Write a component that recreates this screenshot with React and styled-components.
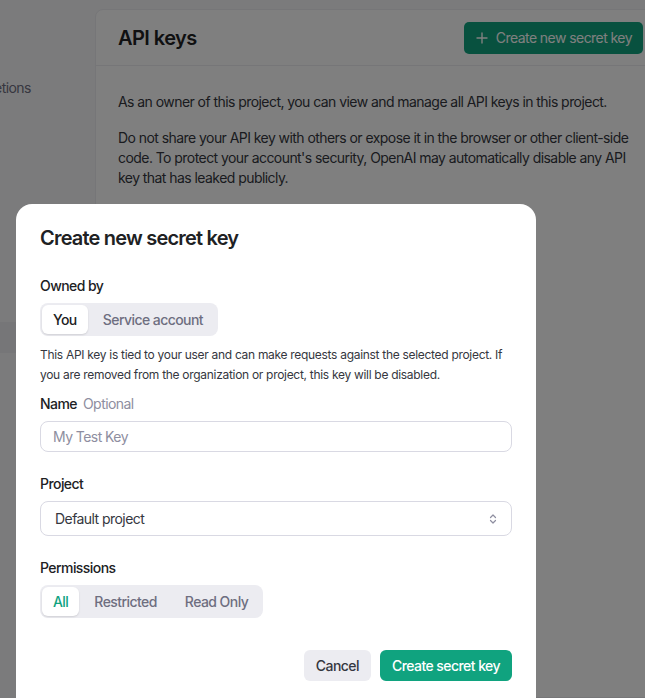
import React from 'react';
import styled, {createGlobalStyle} from 'styled-components';

const GlobalStyle = createGlobalStyle`
  html, body {
    margin: 0;
    padding: 0;
    height: 100%;
    overflow: hidden;
  }
  body {
    font-family: Inter, "Noto Sans", "Liberation Sans", sans-serif;
    letter-spacing: -0.035em;
    color: #202123;
    background: #f7f7f8;
  }
  * { box-sizing: border-box; }
`

const Page = styled.div`
  position: relative;
  display: flex;
  width: 645px;
  height: 698px;
  overflow: hidden;
  background: #f7f7f8;
`

const Sidebar = styled.nav`
  flex: 0 0 149px;
  margin-left: -54px;
  padding-top: 72px;
  display: flex;
  flex-flow: column;
`

const NavItem = styled.div`
  height: 31px;
  display: flex;
  align-items: center;
  padding-left: 8px;
  font-size: 14px;
  color: #6e6e80;
  white-space: nowrap;
  background: ${p => p.active ? '#ececf1' : 'transparent'};
  margin-top: ${p => p.gap || 0}px;
`

const Card = styled.section`
  flex: 0 0 572px;
  margin-top: 9px;
  background: #fff;
  border: 1px solid #ececf1;
  border-radius: 8px 0 0 0;
`

const CardHeader = styled.header`
  display: flex;
  align-items: center;
  justify-content: space-between;
  height: 56px;
  padding: 0 23px 0 22px;
  border-bottom: 1px solid #ececf1;
  h1 {
    margin: 0;
    font-size: 20px;
    font-weight: 600;
  }
`

const HeaderButton = styled.button`
  display: flex;
  align-items: center;
  gap: 8px;
  height: 32px;
  padding: 0 11px 0 12px;
  border: none;
  border-radius: 5px;
  background: #10a37f;
  color: #fff;
  font: inherit;
  font-size: 14px;
  letter-spacing: inherit;
`

const CardBody = styled.div`
  padding: 26px 22px;
  p {
    margin: 0 0 16px;
    font-size: 14px;
    line-height: 20px;
    color: #353740;
  }
`

const Overlay = styled.div`
  position: absolute;
  inset: 0;
  background: rgba(0, 0, 0, 0.5);
`

const Modal = styled.div`
  position: absolute;
  left: 16px;
  top: 204px;
  width: 520px;
  padding: 20px 24px 32px;
  background: #fff;
  border-radius: 16px;
  display: flex;
  flex-flow: column;
  h2 {
    margin: 0 0 24px;
    font-size: 20px;
    line-height: 28px;
    font-weight: 600;
    letter-spacing: -0.04em;
  }
`

const Label = styled.div`
  font-size: 14px;
  line-height: 20px;
  font-weight: 500;
  color: #202123;
  margin-top: ${p => p.top || 0}px;
  margin-bottom: 7px;
  span {
    font-weight: 400;
    color: #8e8ea0;
    margin-left: 6px;
  }
`

const Segmented = styled.div`
  align-self: flex-start;
  display: flex;
  padding: 2px;
  gap: 2px;
  background: #ececf1;
  border-radius: 8px;
`

const Segment = styled.div`
  height: 29px;
  display: flex;
  align-items: center;
  padding: 0 ${p => p.active ? 11 : 13}px;
  border-radius: 6px;
  font-size: 14px;
  font-weight: 500;
  color: ${p => p.active ? (p.accent || '#202123') : '#6e6e80'};
  background: ${p => p.active ? '#fff' : 'transparent'};
  box-shadow: ${p => p.active ? '0 1px 2px rgba(0,0,0,0.12)' : 'none'};
`

const Hint = styled.p`
  margin: 9px 0 9px;
  font-size: 12px;
  line-height: 20px;
  letter-spacing: -0.025em;
  color: #353740;
`

const Field = styled.div`
  display: flex;
  align-items: center;
  justify-content: space-between;
  height: ${p => p.tall ? 35 : 31}px;
  padding: 0 ${p => p.tall ? 14 : 12}px;
  border: 1px solid #d9d9e3;
  border-radius: 8px;
  font-size: 14px;
  color: ${p => p.placeholder ? '#8e8ea0' : '#353740'};
`

const Actions = styled.div`
  display: flex;
  justify-content: flex-end;
  gap: 9px;
  margin-top: 32px;
`

const Button = styled.button`
  height: 31px;
  padding: 0 12px;
  border: none;
  border-radius: 6px;
  font: inherit;
  font-size: 14px;
  font-weight: 500;
  letter-spacing: inherit;
  background: ${p => p.primary ? '#10a37f' : '#ececf1'};
  color: ${p => p.primary ? '#fff' : '#353740'};
`

const Chevrons = () => (
  <svg width="8" height="12" viewBox="0 0 8 12" fill="none" stroke="#8e8ea0" strokeWidth="1.2" strokeLinecap="round" strokeLinejoin="round">
    <path d="M1.5 4.5 L4 2 L6.5 4.5" />
    <path d="M1.5 7.5 L4 10 L6.5 7.5" />
  </svg>
)

const Plus = () => (
  <svg width="12" height="12" viewBox="0 0 12 12" stroke="currentColor" strokeWidth="1.4" strokeLinecap="round">
    <path d="M6 1 V11 M1 6 H11" />
  </svg>
)

export default function App() {
  return (
    <>
      <GlobalStyle/>
      <Page>
        <Sidebar>
          <NavItem>Completions</NavItem>
          <NavItem gap={219} active> </NavItem>
        </Sidebar>
        <Card>
          <CardHeader>
            <h1>API keys</h1>
            <HeaderButton><Plus/>Create new secret key</HeaderButton>
          </CardHeader>
          <CardBody>
            <p>As an owner of this project, you can view and manage all API keys in this project.</p>
            <p>Do not share your API key with others or expose it in the browser or other client-side code. To protect your account's security, OpenAI may automatically disable any API key that has leaked publicly.</p>
          </CardBody>
        </Card>
        <Overlay/>
        <Modal>
          <h2>Create new secret key</h2>
          <Label>Owned by</Label>
          <Segmented>
            <Segment active>You</Segment>
            <Segment>Service account</Segment>
          </Segmented>
          <Hint>This API key is tied to your user and can make requests against the selected project. If you are removed from the organization or project, this key will be disabled.</Hint>
          <Label>Name<span>Optional</span></Label>
          <Field placeholder>My Test Key</Field>
          <Label top={22}>Project</Label>
          <Field tall>Default project<Chevrons/></Field>
          <Label top={22}>Permissions</Label>
          <Segmented>
            <Segment active accent="#10a37f">All</Segment>
            <Segment>Restricted</Segment>
            <Segment>Read Only</Segment>
          </Segmented>
          <Actions>
            <Button>Cancel</Button>
            <Button primary>Create secret key</Button>
          </Actions>
        </Modal>
      </Page>
    </>
  )
}
